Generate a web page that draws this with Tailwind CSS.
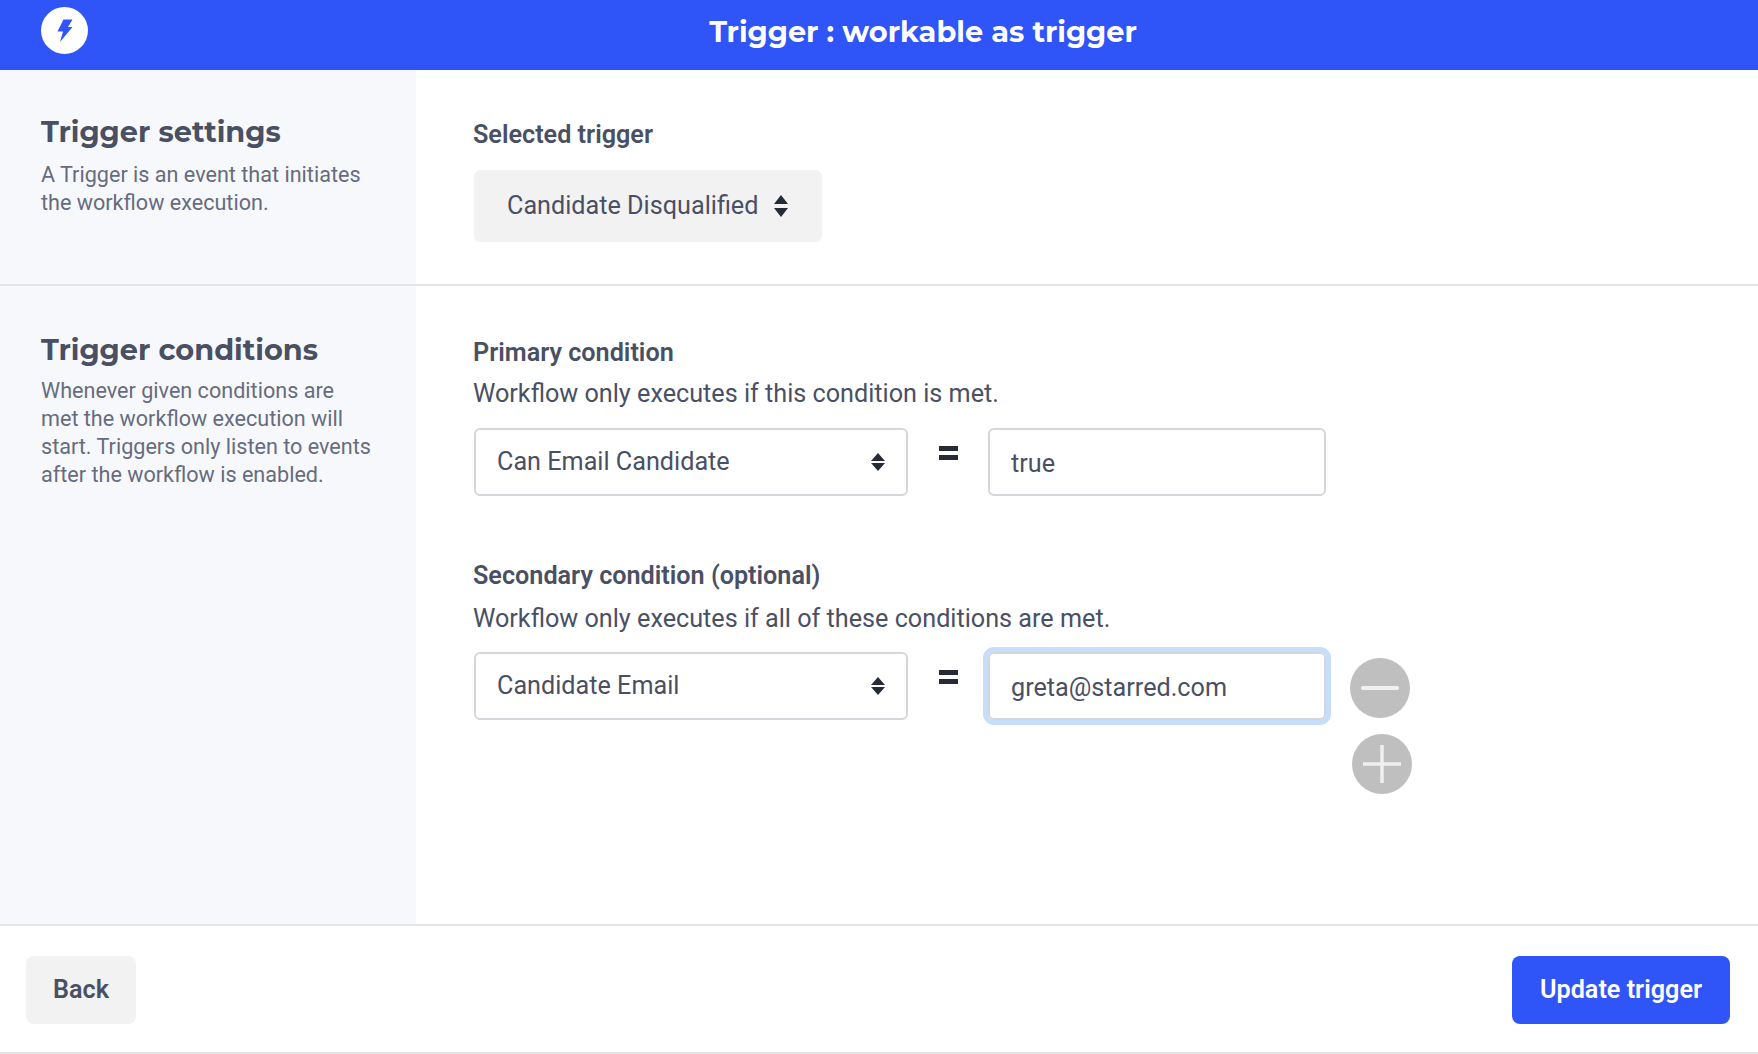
<!DOCTYPE html>
<html lang="en">
<head>
  <meta charset="UTF-8" />
  <title>Trigger</title>
  <script src="https://cdn.jsdelivr.net/npm/@tailwindcss/browser@4"></script>
</head>
<body class="bg-white font-['Roboto',sans-serif] text-[#4a5064] h-[1054px] overflow-hidden">

  <!-- Header -->
  <header class="relative h-[70px] bg-[#2f54f8] flex items-center justify-center pl-[88px]">
    <div class="absolute left-[41px] top-[7px] w-[47px] h-[47px] rounded-full bg-white flex items-center justify-center">
      <svg viewBox="0 0 16 23" class="w-[16px] h-[23px]"><path d="M6.5 0.5H15.5L11 8H15.5L3 23L6 12.5H0.5z" fill="#2f54f8"/></svg>
    </div>
    <h1 class="text-white text-[28.8px] font-bold font-['Montserrat','Open_Sans',sans-serif] -mt-[6px]">Trigger : workable as trigger</h1>
  </header>

  <!-- Trigger settings -->
  <section class="flex h-[216px] border-b-2 border-[#e3e6f0]">
    <div class="w-[416px] shrink-0 bg-[#f7f8fb] pl-[41px] pt-[44px]">
      <h2 class="text-[28.8px] font-bold leading-[36px] font-['Montserrat','Open_Sans',sans-serif]">Trigger settings</h2>
      <p class="mt-[11px] text-[21.6px] leading-[28px] text-[#666c7e]">A Trigger is an event that initiates<br>the workflow execution.</p>
    </div>
    <div class="pl-[57px] pt-[50px]">
      <div class="text-[25.2px] font-semibold leading-[30px]">Selected trigger</div>
      <div class="mt-[20px] ml-[1px] w-[348px] h-[72px] rounded-md bg-[#f2f2f2] flex items-center pl-[33px] text-[25.2px] gap-[15px]">
        Candidate Disqualified
        <svg viewBox="0 0 16 24" class="w-[16px] h-[24px]"><path d="M8 1l7 9H1zM8 23l7-9H1z" fill="#262b3a"/></svg>
      </div>
    </div>
  </section>

  <!-- Trigger conditions -->
  <section class="flex h-[640px] border-b-2 border-[#e3e6f0]">
    <div class="w-[416px] shrink-0 bg-[#f7f8fb] pl-[41px] pt-[46px]">
      <h2 class="text-[28.8px] font-bold leading-[36px] font-['Montserrat','Open_Sans',sans-serif]">Trigger conditions</h2>
      <p class="mt-[9px] text-[21.6px] leading-[28px] text-[#666c7e]">Whenever given conditions are<br>met the workflow execution will<br>start. Triggers only listen to events<br>after the workflow is enabled.</p>
    </div>
    <div class="pl-[57px] pt-[52px]">
      <div class="text-[25.2px] font-semibold leading-[30px]">Primary condition</div>
      <p class="mt-[11px] text-[25.2px] leading-[30px]">Workflow only executes if this condition is met.</p>
      <div class="mt-[19px] ml-[1px] flex items-start">
        <div class="w-[434px] h-[68px] border-2 border-[#d3d6da] rounded-md flex items-center justify-between pl-[21px] pr-[20px] text-[25.2px]">
          Can Email Candidate
          <svg viewBox="0 0 16 20" class="w-[16px] h-[20px]"><path d="M8 1l7 8H1zM8 19l7-8H1z" fill="#262b3a"/></svg>
        </div>
        <div class="w-[80px] flex justify-center mt-[18px]"><div class="w-[19px] h-[14px] border-y-[5px] border-[#262b36]"></div></div>
        <div class="w-[338px] h-[68px] border-2 border-[#d3d6da] rounded-md flex items-center pl-[21px] pt-[3px] text-[25.2px]">true</div>
      </div>

      <div class="mt-[65px] text-[25.2px] font-semibold leading-[30px]">Secondary condition (optional)</div>
      <p class="mt-[13px] text-[25.2px] leading-[30px]">Workflow only executes if all of these conditions are met.</p>
      <div class="mt-[18px] ml-[1px] flex items-start">
        <div class="w-[434px] h-[68px] border-2 border-[#d3d6da] rounded-md flex items-center justify-between pl-[21px] pr-[20px] text-[25.2px]">
          Candidate Email
          <svg viewBox="0 0 16 20" class="w-[16px] h-[20px]"><path d="M8 1l7 8H1zM8 19l7-8H1z" fill="#262b3a"/></svg>
        </div>
        <div class="w-[80px] flex justify-center mt-[18px]"><div class="w-[19px] h-[14px] border-y-[5px] border-[#262b36]"></div></div>
        <div class="w-[338px] h-[68px] border-2 border-[#d3d6da] rounded-md flex items-center pl-[21px] pt-[3px] text-[25.2px] ring-[5px] ring-[#c6defa]">greta@starred.com</div>
        <div class="ml-[24px] flex flex-col mt-[6px] gap-[16px]">
          <div class="w-[60px] h-[60px] rounded-full bg-[#bfbfbf] flex items-center justify-center"><div class="w-[38px] h-[4px] rounded-full bg-[#f0f0f0]"></div></div>
          <div class="ml-[2px] w-[60px] h-[60px] rounded-full bg-[#bfbfbf] flex items-center justify-center">
            <svg viewBox="0 0 38 38" class="w-[38px] h-[38px]"><path d="M19 0v38M0 19h38" stroke="#f0f0f0" stroke-width="3.5"/></svg>
          </div>
        </div>
      </div>
    </div>
  </section>

  <!-- Footer -->
  <footer class="h-[128px] border-b-2 border-[#e4e4e4] flex items-start justify-between pl-[26px] pr-[28px] pt-[30px]">
    <button class="w-[110px] h-[68px] rounded-lg bg-[#f2f2f2] text-[25.2px] font-semibold">Back</button>
    <button class="w-[218px] h-[68px] rounded-lg bg-[#2f54f8] text-white text-[25.2px] font-semibold">Update trigger</button>
  </footer>
</body>
</html>
